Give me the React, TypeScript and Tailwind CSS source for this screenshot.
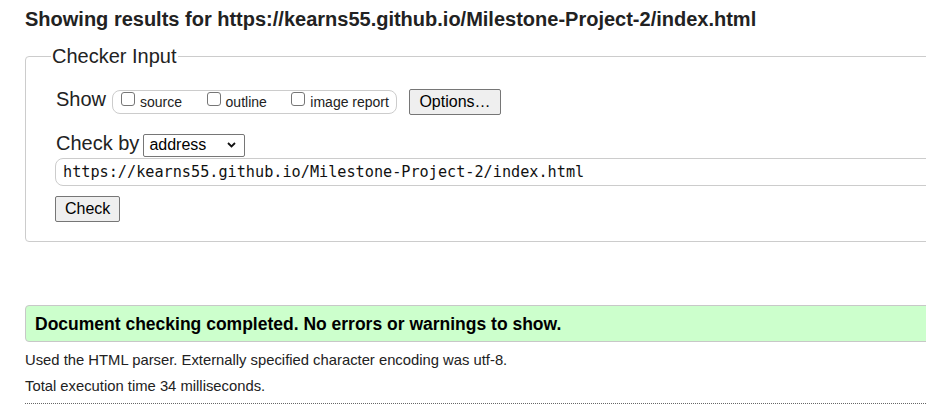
import React from "react";

function Box({ label, last }: { label: string; last?: boolean }) {
  return (
    <div className={`flex items-start ${last ? "" : "mr-[24.5px]"}`}>
      <span className="mt-[1px] block w-[14px] h-[14px] border border-[#767676] rounded-[3px] bg-white" />
      <span className="ml-[5px] mt-[3px] text-[14px] leading-[16px] text-[#222]">{label}</span>
    </div>
  );
}

export default function App() {
  return (
    <div className="w-[926px] h-[417px] overflow-hidden bg-white" style={{ fontFamily: '"Liberation Sans", Arial, sans-serif' }}>
      <div className="w-[1100px] pl-[25px] pt-[7px] text-[#222]">
        <h2 className="text-[20px] leading-[24px] font-bold text-[#222]">
          Showing results for https://kearns55.github.io/Milestone-Project-2/index.html
        </h2>

        <fieldset className="mt-[14px] border border-[#ccc] rounded-[4px] pl-[29px] pt-[21px] pb-[19px]">
          <legend className="ml-[-4px] px-[1px] text-[20px] leading-[23px] text-[#222]">Checker Input</legend>

          <div className="flex items-center h-[26px]">
            <span className="text-[20px] leading-[23px] mb-[5px] mr-[6px] ml-[1px]">Show</span>
            <div className="flex items-start h-[24px] border border-[#ccc] rounded-[8px] pl-[8px] pr-[7px]">
              <Box label="source" />
              <Box label="outline" />
              <Box label="image report" last />
            </div>
            <button className="ml-[12px] h-[26px] px-[9.5px] bg-[#efefef] border border-[#767676] rounded-[2px] text-[16px] leading-[18px] text-black">
              Options…
            </button>
          </div>

          <div className="flex items-center h-[23px] mt-[18px]">
            <span className="text-[20px] leading-[23px] mb-[3px] mr-[4px] ml-[1px]">Check by</span>
            <div className="relative w-[102px] h-[23px]">
              <select
                defaultValue="address"
                className="appearance-none w-full h-full border border-[#767676] rounded-[2px] bg-white pl-[5px] text-[16px] leading-[18px] text-black outline-none"
                style={{ fontFamily: '"Liberation Sans", Arial, sans-serif' }}
              >
                <option value="address">address</option>
              </select>
              <svg className="absolute right-[9px] top-[9px] pointer-events-none" width="9" height="6" viewBox="0 0 9 6">
                <path d="M1 1 L4.5 4.5 L8 1" fill="none" stroke="#111" strokeWidth="1.8" />
              </svg>
            </div>
          </div>

          <div className="mt-[2px] h-[28px] flex items-center border border-[#ccc] rounded-l-[8px] pl-[7px]">
            <span className="text-[15.2px] text-[#111]" style={{ fontFamily: '"DejaVu Sans Mono", monospace' }}>
              https://kearns55.github.io/Milestone-Project-2/index.html
            </span>
          </div>

          <button className="mt-[10px] h-[26px] px-[9px] bg-[#efefef] border border-[#767676] rounded-[2px] text-[16px] leading-[18px] text-black">
            Check
          </button>
        </fieldset>

        <div className="mt-[63px] h-[37px] flex items-center bg-[#ccffcc] border border-[#c8c8c8] rounded-[4px] pl-[9px]">
          <span className="text-[17.5px] leading-[20px] font-bold text-black">
            Document checking completed. No errors or warnings to show.
          </span>
        </div>

        <p className="mt-[8px] text-[14.8px] leading-[20px] text-[#222]">
          Used the HTML parser. Externally specified character encoding was utf-8.
        </p>
        <p className="mt-[6px] text-[14.8px] leading-[20px] text-[#222]">Total execution time 34 milliseconds.</p>

        <div className="mt-[7px] border-t border-dotted border-[#666]" />
      </div>
    </div>
  );
}
